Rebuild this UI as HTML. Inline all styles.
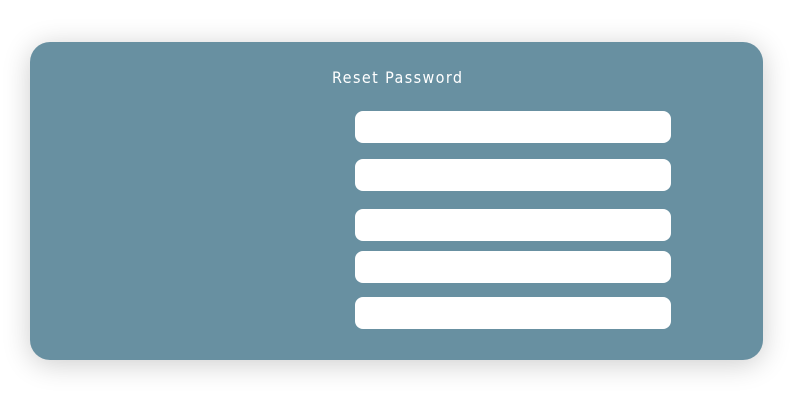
<!DOCTYPE html>
<html><head><style>
html,body{margin:0;width:807px;height:414px;background:#fff;overflow:hidden;font-family:"DejaVu Sans","Liberation Sans",sans-serif}
.card{position:absolute;left:30px;top:42px;width:733px;height:318px;background:#6890a1;border-radius:20px;box-shadow:0 4px 28px rgba(0,0,0,0.2)}
h1{position:absolute;left:332px;top:67px;margin:0;font-family:"DejaVu Sans Condensed","DejaVu Sans",sans-serif;font-stretch:condensed;font-size:16px;font-weight:500;color:#fff;letter-spacing:1.4px;line-height:22px}
.i{position:absolute;left:355px;width:316px;height:32px;background:#fff;border-radius:8px}
</style></head><body>
<div class="card"></div>
<h1>Reset Password</h1>
<div class="i" style="top:111px"></div>
<div class="i" style="top:159px"></div>
<div class="i" style="top:209px"></div>
<div class="i" style="top:251px"></div>
<div class="i" style="top:297px"></div>
</body></html>
